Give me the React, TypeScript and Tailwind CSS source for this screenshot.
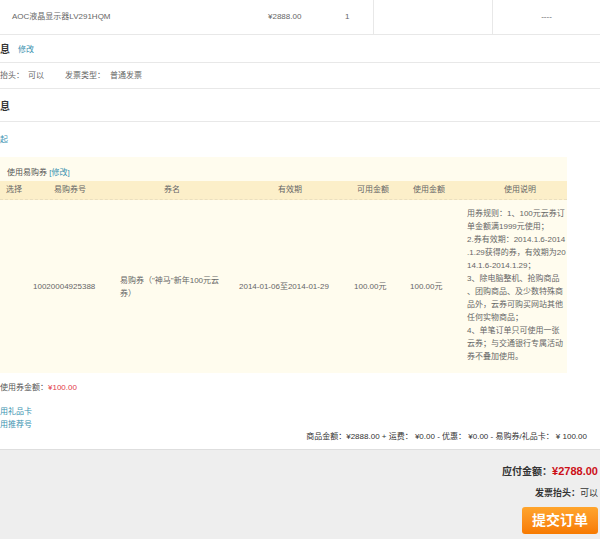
import React from 'react';

const FONT = { fontFamily: '"Liberation Sans", "Noto Sans CJK SC", sans-serif' };

const RULES = [
    '用券规则：1、100元云券订',
    '单金额满1999元使用；',
    '2.券有效期：2014.1.6-2014',
    '.1.29获得的券，有效期为20',
    '14.1.6-2014.1.29；',
    '3、除电脑整机、抢购商品',
    '、团购商品、及少数特殊商',
    '品外，云券可购买网站其他',
    '任何实物商品；',
    '4、单笔订单只可使用一张',
    '云券；与交通银行专属活动',
    '券不叠加使用。',
];

export default function App() {
    return (
        <div style={FONT} className="w-[600px] h-[539px] overflow-hidden bg-white text-[8px] text-[#666]">
            {/* product row */}
            <div className="flex h-[35px] items-stretch border-b border-[#e8e8e8]">
                <div className="w-[268px] pl-[12px] flex items-center">AOC液晶显示器LV291HQM</div>
                <div className="w-[77px] flex items-center">¥2888.00</div>
                <div className="w-[28px] flex items-center">1</div>
                <div className="w-[120px] border-x border-[#e8e8e8]" />
                <div className="flex-1 flex items-center justify-center">----</div>
            </div>

            {/* invoice */}
            <div className="h-[28px] flex items-center gap-[8px] pt-[2px] border-b border-[#e8e8e8]">
                <span className="text-[10px] font-bold text-[#333]">息</span>
                <span className="text-[#3a92b0]">修改</span>
            </div>
            <div className="h-[26px] flex items-center border-b border-[#e8e8e8]">
                <span className="w-[28px]">抬头：</span>
                <span className="w-[37px]">可以</span>
                <span className="w-[45px]">发票类型：</span>
                <span>普通发票</span>
            </div>

            {/* coupons */}
            <div className="h-[33px] flex items-center pt-[2px] border-b border-[#e8e8e8]">
                <span className="text-[10px] font-bold text-[#333]">息</span>
            </div>
            <div className="h-[35px] flex items-center text-[#3a92b0]">起</div>

            <div className="w-[567px] bg-[#fffcee]">
                <div className="h-[24px] pl-[7px] pt-[10px] leading-[12px] text-[#555]">
                    使用易购券 <span className="text-[#3a92b0]">[修改]</span>
                </div>
                <div className="grid grid-cols-[28px_84px_120px_116px_50px_62px_107px] h-[19px] items-center bg-[#fcefc9] border-b border-dashed border-[#eadfbf] text-[#666]">
                    <div className="text-center">选择</div>
                    <div className="text-center">易购券号</div>
                    <div className="text-center">券名</div>
                    <div className="text-center">有效期</div>
                    <div className="text-center">可用金额</div>
                    <div className="text-center">使用金额</div>
                    <div className="pl-[44px]">使用说明</div>
                </div>
                <div className="grid grid-cols-[28px_84px_120px_116px_50px_62px_107px] h-[173px] items-center">
                    <div />
                    <div className="pl-[5px]">10020004925388</div>
                    <div className="pl-[8px] leading-[13px]">
                        易购券（"神马"新年100元云<br />券）
                    </div>
                    <div className="pl-[7px]">2014-01-06至2014-01-29</div>
                    <div className="pl-[6px]">100.00元</div>
                    <div className="pl-[12px]">100.00元</div>
                    <div className="pl-[7px] self-start pt-[7px] leading-[13px] whitespace-nowrap">
                        {RULES.map((line, i) => (
                            <div key={i}>{line}</div>
                        ))}
                    </div>
                </div>
            </div>

            <div className="h-[29px] flex items-center text-[#555]">
                使用券金额：<span className="text-[#e23a4a]">¥100.00</span>
            </div>
            <div className="mt-[3px] leading-[13px] text-[#3a92b0]">
                <div>用礼品卡</div>
                <div>用推荐号</div>
            </div>
            <div className="leading-[11px] text-right pr-[13px] text-[#333]">
                商品金额：¥2888.00 + 运费： ¥0.00 - 优惠： ¥0.00 - 易购券/礼品卡： ¥ 100.00
            </div>

            {/* totals */}
            <div className="mt-[7px] h-[100px] border-t border-[#dedede] bg-[#eeeeee] pt-[13px] pr-[2px] flex flex-col items-end">
                <div className="leading-[16px] text-[10px] font-bold text-[#333]">
                    应付金额：<span className="text-[11px] text-[#cc1018]">¥2788.00</span>
                </div>
                <div className="mt-[6px] leading-[14px] text-[9px] text-[#333]">
                    <span className="font-bold">发票抬头：</span>可以
                </div>
                <button className="mt-[7px] w-[76px] h-[27px] rounded-[3px] bg-gradient-to-b from-[#ffa52c] to-[#f77a00] text-white text-[14px] font-bold">
                    提交订单
                </button>
            </div>
        </div>
    );
}
